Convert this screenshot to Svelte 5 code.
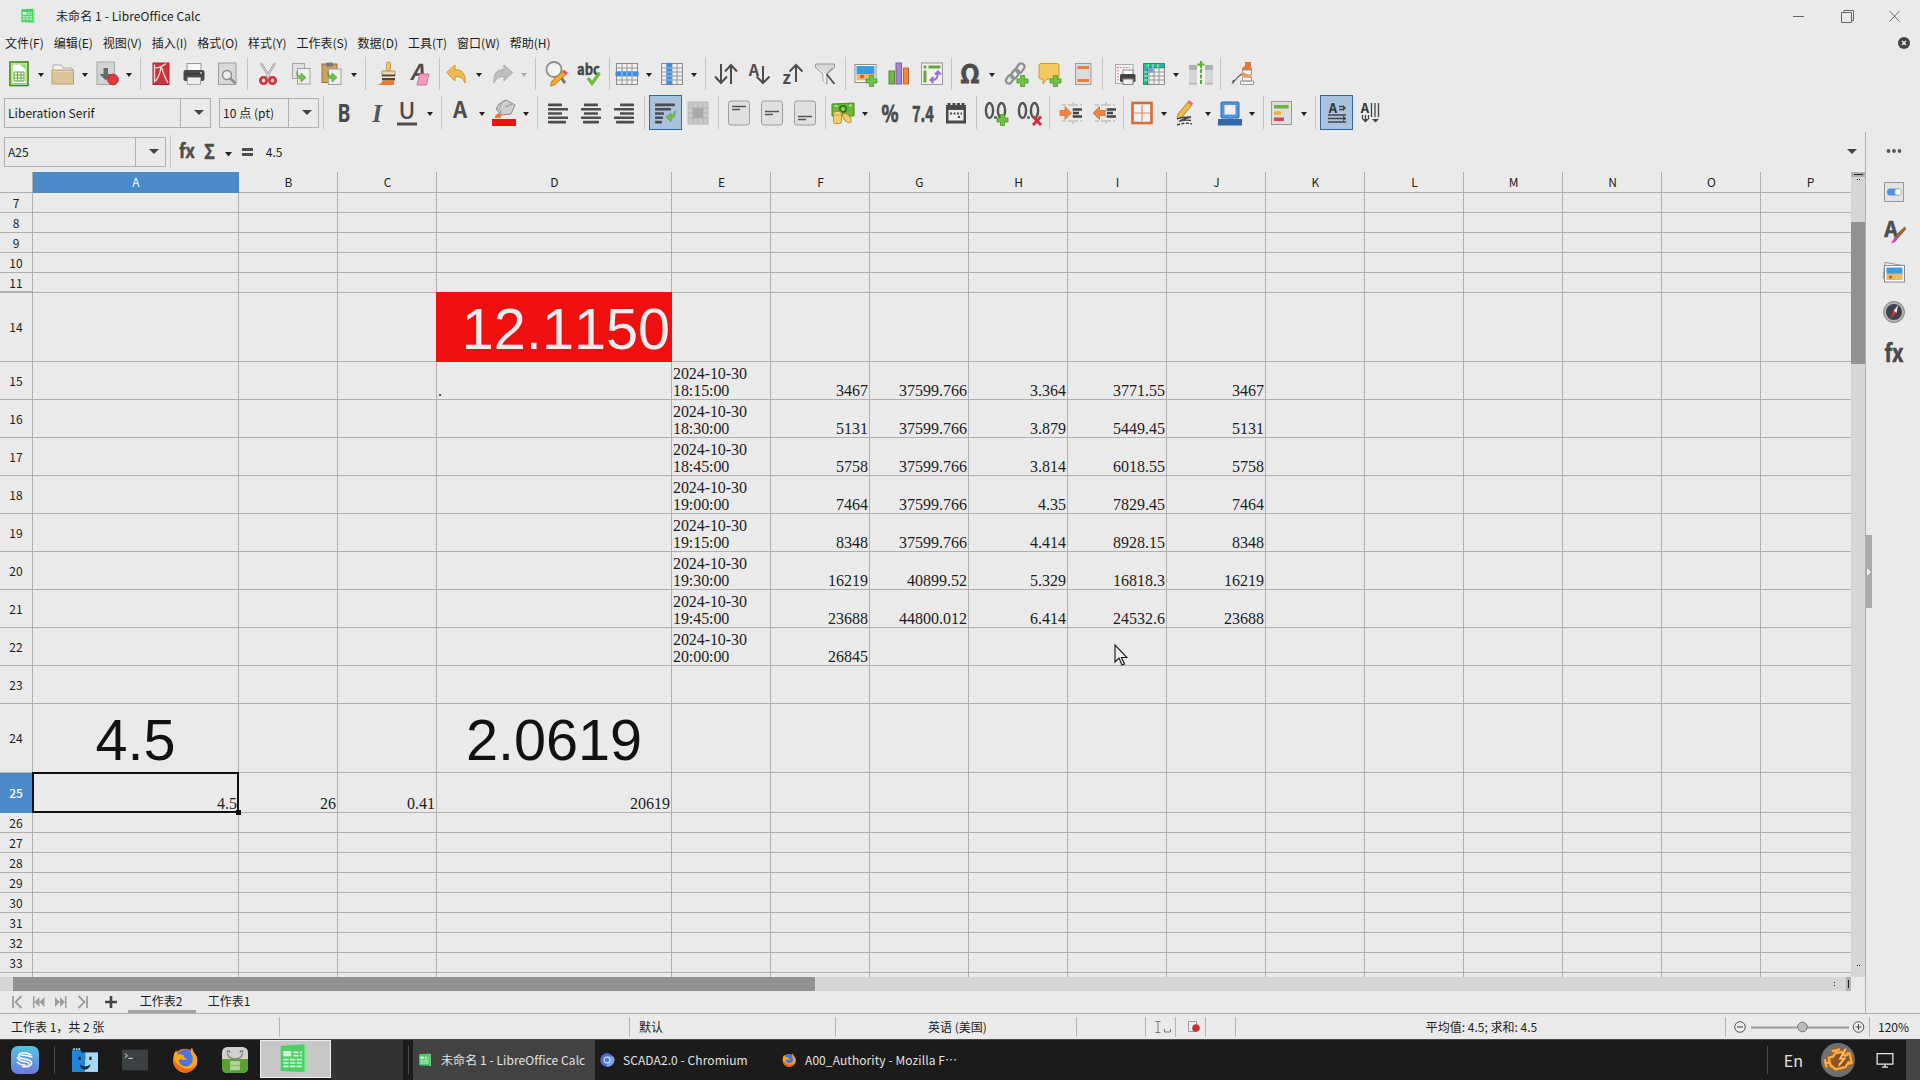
<script>
  const plus = '<path d="M15.500 13.500h4v3.500h3.500v4h-3.500v3.500h-4v-3.500h-3.500v-4h3.500z" fill="#73c048" stroke="#459a22" stroke-width=".8"/>';
  const grid = (extra) => `<rect x="1.500" y="1.500" width="21" height="21" fill="#efefef" stroke="#8c8c8c"/><path d="M2 6h20M2 10h20M2 14h20M2 18h20M7 2v20M12 2v20M17 2v20" stroke="#979797" fill="none"/>${extra}`;
  const T = (x, y, s, t, f = '#4d4d4d', w = 700, extra = '') =>
    `<text x="${x}" y="${y}" font-size="${s}" font-weight="${w}" fill="${f}" text-anchor="middle" ${extra}>${t}</text>`;
  const bars = (xs) => xs.map(([x, w], i) => `<rect x="${x}" y="${2.6 + i * 4.3}" width="${w}" height="2.600" rx=".6" fill="#4d4d4d"/>`).join('');
  const firefox = '<circle cx="12" cy="12.500" r="11" fill="#f57c14"/><circle cx="12.500" cy="10" r="8" fill="#4c73e4"/><path d="M2 6Q0 14 5 20T18 22Q25 18 23 9L20 5Q19 1 18 1Q16 4 19 9Q20 16 14 18Q7 18 6 12L9 11Q11 13 14 11Q11 10 11 8Q8 6 5 7L4 3z" fill="#fba818"/><path d="M1.500 11Q2 20 10 23T22 16Q18 21 12 20Q5 18 1.500 11z" fill="#f1661a"/>';
  const calc = '<path d="M2 2l18-1v21L2 21z" fill="#4ccf67"/><path d="M20 1l2 1v20l-2 1z" fill="#86e998"/><rect x="4" y="6" width="6" height="4" fill="#d4f8d8"/><path d="M11.500 7h6.500M11.500 9.500h6.500M4 12.500h14M4 15h14M4 17.500h14" stroke="#d4f8d8" stroke-width="1.300" stroke-dasharray="4 1"/>';
  const chip = (b) => `<rect x="1.500" y="0" width="21" height="24" rx="2.500" fill="#e0e0e0" stroke="#9d9d9d"/>${b}`;
  const zeros = '<g fill="none" stroke="#555" stroke-width="2.400"><ellipse cx="4.500" cy="9.500" rx="3.600" ry="7.500"/><ellipse cx="16.500" cy="9.500" rx="3.600" ry="7.500"/></g><circle cx="10.500" cy="16.500" r="1.500" fill="#555"/>';
  const hand = '<path d="M3 4h20M3 20h20M14 1v22" stroke="#aaa" stroke-dasharray="4 2"/>';

  const icons = {
    new: '<rect x="3" y="0" width="18" height="23.500" fill="#dff5c8" stroke="#3a8a12" stroke-width="1.600"/><rect x="5" y="2" width="14" height="19.500" fill="#fff" stroke="#9bd26a"/><path d="M7 10h10v9H7zM7 13h10M7 16h10M10.500 10v9M14 10v9" fill="none" stroke="#5aa82c"/><path d="M13 2.500h5.500v5z" fill="#9bd26a"/>',
    open: '<path d="M2 3h8l2 3h9v4H2z" fill="#f5f5f5" stroke="#aaa"/><path d="M1 8h21.500v14H1z" fill="#dcc49a" stroke="#bf9f6c"/><path d="M2 9.500h20" stroke="#ead9b8"/>',
    save: '<rect x="2" y="0" width="17.500" height="22.500" fill="#d4d4d4" stroke="#a5a5a5"/><path d="M8.500 6h4.500v6h4l-6.200 6.500L4.500 12h4z" fill="#6a6a6a"/><circle cx="18" cy="17.500" r="5.300" fill="#dc3b41" stroke="#b92b33"/>',
    pdf: '<rect x="4" y="1" width="16" height="21.500" fill="#c9353d" stroke="#a9252d"/><path d="M17 1.500Q11 6 6.500 6M12 4Q15 14 19 21M12 4Q11 14 6.500 19M5.500 2.500v18" stroke="#f3dede" stroke-width="1.300" fill="none"/>',
    print: '<rect x="5" y="1.500" width="14" height="9" fill="#f7f7f7" stroke="#999"/><rect x="1.500" y="8" width="21" height="11" rx="2" fill="#4a4a4a"/><path d="M2 12h20" stroke="#333"/><circle cx="19" cy="11" r="1" fill="#9cf"/><path d="M5.500 15.500h13v7h-13z" fill="#efefef" stroke="#aaa"/>',
    preview: '<rect x="3.500" y="1" width="17.500" height="21.500" fill="#d9d9d9" stroke="#9c9c9c"/><circle cx="12" cy="13" r="4.500" fill="#ececec" stroke="#8d8d8d" stroke-width="1.500"/><path d="M15.500 16.500l5 5" stroke="#8a8a8a" stroke-width="2.500"/>',
    cut: '<path d="M5 1l9 15M19 1l-9 15" stroke="#9a9a9a" stroke-width="2.400"/><path d="M5 1l9 15M19 1l-9 15" stroke="#ddd" stroke-width="1"/><circle cx="7.500" cy="18.500" r="3.200" fill="#f3d4d4" stroke="#cf3038" stroke-width="2.600"/><circle cx="16.500" cy="18.500" r="3.200" fill="#f3d4d4" stroke="#cf3038" stroke-width="2.600"/>',
    copy: '<rect x="3.500" y="1.500" width="12" height="15" fill="#e0e0e0" stroke="#a5a5a5"/><rect x="8.500" y="6.500" width="12.500" height="15.500" fill="#efefef" stroke="#a0a0a0"/><path d="M8 9.500q0 4.500 4 4.500v-3l5 4.500-5 4.500v-3q-5 0-4-7.500z" fill="#74c547" stroke="#4e9a2a" stroke-width=".7"/>',
    paste: '<rect x="2" y="2" width="15" height="18.500" fill="#c9a25c" stroke="#96733a"/><rect x="6" y=".5" width="7" height="4" rx="1" fill="#777"/><rect x="8.500" y="7" width="12.500" height="15.500" fill="#efefef" stroke="#a0a0a0"/><path d="M8 9.500q0 4.500 4 4.500v-3l5 4.500-5 4.500v-3q-5 0-4-7.500z" fill="#74c547" stroke="#4e9a2a" stroke-width=".7"/>',
    clone: '<rect x="12.500" y="0" width="4" height="9" rx="1.600" fill="#f0c170" stroke="#b9853a" stroke-width=".8"/><path d="M8 9h13v5H8z" fill="#ecd9b0" stroke="#a18450" stroke-width=".8"/><path d="M8 12.500h13v2.200H8zM8 16h13v2.500H8z" fill="#4b4640"/><path d="M8 14.500h13V16H8z" fill="#efe6d2"/><path d="M9 18.500h11V23H2Q7 22.500 9 18.500z" fill="#ee7b2a"/>',
    clear: T(10, 18, 22, 'A', '#4d4d4d', 700, 'font-style="italic"') + '<path d="M13 12h9l-2.500 11H10z" fill="#f29ac0" stroke="#d8709e"/>',
    undo: '<path d="M1.500 10.500L10 3v4.500q11.500 0 10 13.500-2.500-7-10-6.500V19z" fill="#f2bb52" stroke="#cf9a32"/>',
    redo: '<path d="M22.500 10.500L14 3v4.500q-11.500 0-10 13.500 2.500-7 10-6.500V19z" fill="#bfbfbf" stroke="#ababab"/>',
    find: '<circle cx="10" cy="7.500" r="7.500" fill="#f3f3f3" stroke="#8d8d8d" stroke-width="1.800"/><path d="M15 13l6 8" stroke="#777" stroke-width="3"/><path d="M20 8l3.500 3L11 22.500l-4.500 1.500L8 19z" fill="#f0ab32" stroke="#b87d1b"/><path d="M20 8l3.500 3-2 2L18 10z" fill="#dd5a7c"/>',
    spell: T(11.5, 12.500, 15, 'abc', '#444', 700, 'stroke="#444" stroke-width=".4" textLength="23" lengthAdjust="spacingAndGlyphs"') + '<path d="M11 16l4 5.500L22.500 11" stroke="#6bbd3d" stroke-width="3.200" fill="none"/>',
    row: grid('<rect x=".5" y="9.500" width="23" height="4.500" fill="#3d8de0"/><path d="M7 10v4M12 10v4M17 10v4" stroke="#9ccbf5"/>'),
    col: grid('<rect x="6.500" y=".8" width="5.500" height="22" fill="#3d8de0"/><path d="M7 6h5M7 10h5M7 14h5M7 18h5" stroke="#9ccbf5"/>'),
    sort: '<path d="M7 2v19M1 14.500L7 21l6-6.500M17 22V3M11 9.500L17 3l6 6.500" stroke="#4d4d4d" stroke-width="2" fill="none"/>',
    az: T(7, 14, 16, 'A') + '<path d="M16 4v17M9.500 14.500L16 21l6.500-6.500" stroke="#4d4d4d" stroke-width="2" fill="none"/>',
    za: T(6.5, 22, 17, 'z') + '<path d="M16 20V3M9.500 9.500L16 3l6.500 6.500" stroke="#4d4d4d" stroke-width="2" fill="none"/>',
    filter: '<path d="M2.500 2h19v3.500L14 12v10l-4-3v-7L2.500 5.500z" fill="#d9d9d9" stroke="#969696"/><path d="M5 6l5.500 6v7.500l2.500 2V12" fill="#f4f4f4"/><path d="M13.500 12l8 10" stroke="#555" stroke-width="2"/><path d="M19.500 6l-5 5" stroke="#888"/>',
    image: '<rect x="1" y="2.500" width="21" height="18" fill="#fff" stroke="#8c8c8c"/><rect x="2.500" y="4" width="18" height="9" fill="#3a9be0"/><rect x="2.500" y="12" width="18" height="6.500" fill="#eeb860"/><circle cx="8" cy="14.500" r="2" fill="#d85b2a"/>' + plus,
    chart: '<rect x="2" y="9" width="5.500" height="13" fill="#74b54a" stroke="#538c30"/><rect x="9" y="1" width="5.500" height="21" fill="#a682cf" stroke="#7d59a8"/><rect x="16.500" y="6" width="5" height="16" fill="#ee8542" stroke="#c9622a"/>',
    pivot: '<rect x="1.500" y="1" width="21" height="21.500" fill="#f2f2f2" stroke="#999"/><path d="M3.500 3.500h3v3h-3zM8.500 3.500h12v3h-12zM3.500 8.500h3v12h-3z" fill="#67a83c"/><path d="M11 18q7 1 7-8M15 12.500l3-3 3 3M13.500 15l-3 3 3 3" stroke="#9a6fce" stroke-width="2" fill="none"/>',
    omega: T(12, 21, 25, 'Ω', '#4d4d4d', 700, 'stroke="#4d4d4d" stroke-width=".9"'),
    link: '<g fill="none" stroke="#919191" stroke-width="2.400"><rect x="12" y="1" width="6.500" height="10" rx="3" transform="rotate(35 15 6)"/><rect x="7" y="7" width="6" height="10" rx="3" transform="rotate(35 10 12)"/><rect x="2" y="13" width="6" height="9" rx="3" transform="rotate(35 5 17)"/></g>' + plus,
    comment: '<path d="M3 1.500h16q2 0 2 2V16q0 1-2 1H9l-4 5v-5H3q-2 0-2-2V3.500q0-2 2-2z" fill="#f3ca5e" stroke="#c99a30"/>' + plus,
    header: '<rect x="4.500" y="1.500" width="15.500" height="21" fill="#dcdcdc" stroke="#9c9c9c"/><path d="M6.500 5.500h11.500M6.500 18.500h11.500" stroke="#e77b3a" stroke-width="3"/>',
    parea: '<rect x="3.500" y="2.500" width="17.500" height="19" fill="#f2f2f2" stroke="#aaa"/><path d="M5 5.500h13M6 5v14" stroke="#dc6464" stroke-dasharray="1.500 1.500"/><rect x="11" y="8" width="10" height="5" fill="#fff" stroke="#888"/><rect x="8" y="12" width="15.500" height="8" rx="1.500" fill="#444"/><rect x="11" y="17" width="10" height="5.500" fill="#eee" stroke="#888"/>',
    freeze: grid('<path d="M1.500 1.500h21v4h-17v17h-4z" fill="#2fb693" stroke="#169372"/><path d="M6 2v4M11 2v4M16 2v4M2 10h4M2 14h4M2 18h4" stroke="#b5eadb"/><rect x="6.500" y="6.500" width="5" height="4" fill="#5ca4ea"/>'),
    split: '<path d="M0 3h8v19H0zM16 3h8v19h-8z" fill="#d6d6d6"/><path d="M0 3h8v5H0zM16 3h8v5h-8zM0 21h8v1.500H0zM16 21h8v1.500h-8z" fill="#b0b0b0"/><rect x="8.500" y="4" width="7" height="18.500" fill="#f8f8f8"/><path d="M12 7v16" stroke="#56b22b" stroke-width="2.200" stroke-dasharray="4 1.500"/><path d="M12-1v7M8.500 2.500h7" stroke="#56b22b" stroke-width="2.200"/>',
    draw: '<path d="M13 12q-5 3-7 6l-1 1q-1 3-4 3.500 2-2 1.500-4l2.500-1q3-4 8-7z" fill="#555"/><path d="M15 0h6v6h1v3H12V6l3-2z" fill="#e2793a"/><path d="M12.500 8h9v5h-9zM12.500 15h9v4h-9zM10.500 19h13v3.500h-13z" fill="#f2f2f2" stroke="#999"/><path d="M12.500 10l9 4v2l-9-1z" fill="#ee9a62"/>',
    bold: T(12, 21, 25, 'B', '#4a4a4a', 700, 'font-family="Noto Sans" textLength="13" lengthAdjust="spacingAndGlyphs"'),
    italic: T(12, 21, 25, 'I', '#555', 700, 'font-style="italic" font-family="Liberation Serif"'),
    underline: T(11, 18, 23, 'U', '#4a4a4a', 500) + '<rect x="1" y="21.500" width="20" height="3" fill="#4d4d4d"/>',
    fontcolor: T(12, 17, 22, 'A'),
    fill: '<path d="M7 3l7-4 9 5-4 9-10 1-5-6z" fill="#cfcfcf" stroke="#888"/><path d="M8 7q1-8 5-7M13 6l7-3M4 8q5-2 5 6" stroke="#999" fill="none"/><path d="M3 15q4-5 6-1v3H3z" fill="#e77b3a"/><rect x="0" y="18" width="24" height="7" fill="#f01010"/>',
    left: bars([[2, 14], [2, 20], [2, 14], [2, 20], [2, 18]]),
    center: bars([[5, 14], [2, 20], [5, 14], [2, 20], [4, 16]]),
    right: bars([[8, 14], [2, 20], [8, 14], [2, 20], [4, 18]]),
    wrap: bars([[2, 20], [2, 16], [2, 9], [2, 8], [2, 7]]) + '<path d="M22 10q1 7-4 7.500V21l-5-5 5-4v3q3-1 4-5z" fill="#79bd50" stroke="#4f9a2c" stroke-width=".6"/>',
    merge: '<rect x="2" y="1" width="20" height="22" fill="#c9c9c9" stroke="#b5b5b5"/><path d="M2 7h20M2 12h20M2 17h20M7 2v20M12 2v20M17 2v20" stroke="#b3b3b3"/><rect x="7" y="7" width="10" height="10" fill="#aaa"/>',
    vtop: chip('<path d="M5 5.500h14M5 8.500h8" stroke="#555" stroke-width="1.600"/>'),
    vmid: chip('<path d="M5 10.500h14M5 13.500h8" stroke="#555" stroke-width="1.600"/>'),
    vbot: chip('<path d="M5 15.500h14M5 18.500h8" stroke="#555" stroke-width="1.600"/>'),
    money: '<path d="M1 3l22-1v13H1z" fill="#6cb539" stroke="#4b8f22"/><circle cx="12" cy="8" r="4" fill="#2f7a14"/><circle cx="12" cy="8" r="2" fill="#a0d673"/><path d="M3.500 5h3M18 4.500h3" stroke="#c4e8a4" stroke-width="1.500"/><rect x="2.500" y="10.500" width="8" height="12" rx="2" fill="#f0cf70" stroke="#b98f30"/><path d="M2.500 14h8" stroke="#c9a040"/><ellipse cx="16" cy="17" rx="3" ry="5.500" transform="rotate(-40 16 17)" fill="#f0cf70" stroke="#b98f30"/>',
    percent: T(12, 20.500, 22, '%', '#4a4a4a', 700, 'stroke="#4a4a4a" stroke-width=".8" textLength="17" lengthAdjust="spacingAndGlyphs"'),
    number: T(12, 20.500, 22, '7.4', '#4a4a4a', 700, 'stroke="#4a4a4a" stroke-width=".5" textLength="22" lengthAdjust="spacingAndGlyphs"'),
    date: '<path d="M2 4h20v18.500H2z" fill="#4a4a4a"/><path d="M5 2v3M10 2v3M14.500 2v3M19 2v3" stroke="#4a4a4a" stroke-width="3"/><rect x="4.500" y="9" width="15" height="10.500" fill="#efefef"/><path d="M6 12.500h12M14 16h3" stroke="#4a4a4a" stroke-width="2" stroke-dasharray="2 1.500"/>',
    addDec: zeros + plus,
    delDec: zeros + '<path d="M15 15.500l8 8.500M23 15.500l-8 8.500" stroke="#cf3038" stroke-width="3"/>',
    indent: hand + '<path d="M1 9.500h5v-4l6.500 6.500L6 18.500v-4H1z" fill="#ee8542" stroke="#cf6a2c" stroke-width=".7"/><path d="M14 8.500h9M14 12h6M14 15.500h9" stroke="#444" stroke-width="2.300"/>',
    outdent: hand + '<path d="M13 9.500H7.500v-4L1 12l6.500 6.500v-4H13z" fill="#ee8542" stroke="#cf6a2c" stroke-width=".7"/><path d="M15 8.500h9M15 12h6M15 15.500h9" stroke="#444" stroke-width="2.300"/>',
    border: '<rect x="2.500" y="2" width="19" height="20" fill="#f3f3f3" stroke="#d96a31" stroke-width="2.600"/><path d="M12 4v16M4 12h16" stroke="#e08a5e" stroke-width="1.200"/>',
    pen: '<path d="M14 1l4 3-10 12-5 2 1-5z" fill="#f0b94a" stroke="#b5842a"/><path d="M15-1l4.500 3.500-2 2L13 1.500z" fill="#e56f90"/><path d="M3 18q5-2 14-2-8 2-12 4.500 6-2 12-1" stroke="#444" stroke-width="1.300" fill="none"/><path d="M3 24q8-3 15-1" stroke="#444" stroke-width="1.500" fill="none" stroke-dasharray="3 1.500"/>',
    bcolor: '<rect x="3" y="1" width="18" height="16" rx="1" fill="#4c94e0" stroke="#2f6bb0"/><rect x="6.500" y="4" width="11" height="9.500" fill="#f0f0f0"/><rect x="0" y="18" width="24" height="6.500" fill="#3465a4"/><path d="M9 16h6v2H9z" fill="#4c94e0"/>',
    cond: '<rect x="1.500" y="0.500" width="20" height="23" fill="#dedede" stroke="#9a9a9a"/><rect x="4" y="4" width="14.500" height="3.500" fill="#6fb441"/><rect x="4" y="10.300" width="7" height="3.500" fill="#efb33c"/><rect x="4" y="16.500" width="10" height="3.500" fill="#d9474f"/>',
    ltr: T(8, 12, 13, 'A', '#333') + '<path d="M14 5.500h5M14 8.500h5M3 14h18M3 17.500h18M3 21h18" stroke="#444" stroke-width="1.300"/><path d="M18 4l3 3-3 3zM18 14.500l3 3-3 3z" fill="#444"/>',
    ttb: T(7, 12, 13, 'A', '#333') + '<path d="M13.500 2v14M17 2v14M20.500 2v14M4.500 14v4M7.500 14v4M10.500 14v4" stroke="#444" stroke-width="1.300"/><path d="M4 18h7l-3.500 3.500zM14 18h7l-3.500 3.500z" fill="#444"/>',
    props: '<rect x="2.500" y="2.500" width="19" height="19" fill="#e2e2e2" stroke="#999"/><rect x="5" y="8.500" width="14.500" height="7" rx="3.500" fill="#4690dd"/><circle cx="16" cy="12" r="3.200" fill="#fff" stroke="#aaa" stroke-width=".6"/>',
    styles: T(9, 17, 21, 'A', '#4d4d4d', 700, 'stroke="#4d4d4d" stroke-width=".5"') + '<path d="M22.500 7l1.500 2-8 9-3-2z" fill="#9c6434" stroke="#7a4a20" stroke-width=".5"/><path d="M13 16l3 2.500q-3 4.500-7 4.500 2-2 4-7z" fill="#b94ab0"/>',
    gallery: '<path d="M3 2.500l18 3v14L1 18z" fill="#efefef" stroke="#999"/><rect x="2.500" y="5.500" width="20" height="16.500" fill="#fff" stroke="#888"/><rect x="4.500" y="7.500" width="16" height="7" fill="#3a9be0"/><rect x="4.500" y="13.500" width="16" height="6.500" fill="#eeb860"/><circle cx="8.500" cy="17" r="1.600" fill="#d84b2a"/>',
    nav: '<circle cx="12" cy="12" r="10.500" fill="#b5b5b5" stroke="#858585"/><circle cx="12" cy="12" r="8" fill="#3c434c"/><path d="M16 5l-1.500 8-3-2z" fill="#eee"/><path d="M8 19l3.500-8 3 2z" fill="#dc3038"/>',
    fx: T(12, 21.500, 24, 'fx', '#4a4a4a', 700, 'stroke="#4a4a4a" stroke-width=".6" textLength="19" lengthAdjust="spacingAndGlyphs"'),
    calc, firefox,
    deepin: '<defs><linearGradient id="dg" x1="0" y1="0" x2="0" y2="1"><stop offset="0" stop-color="#55c3e4"/><stop offset="1" stop-color="#6f78de"/></linearGradient></defs><rect x="0" y="0" width="24" height="24" rx="6" fill="url(#dg)"/><path d="M17 7.500Q12 4.500 8 6.500q-3 2 0 3.800 3 1 7 1.700 4 1.500 2 4-2 2.500-7 1.500M18 9.500Q13 7.500 9 8M5.500 10q1.500 3 6 3.500t3.500 2M5.500 14q3 2.500 7 2.500" stroke="#fff" stroke-width="1.300" fill="none" stroke-linecap="round"/>',
    files: '<path d="M0 3h8l1 2h3v18H0z" fill="#1e86dc"/><path d="M12 5h12v18H12z" fill="#a9d8f6"/><path d="M1 2h7" stroke="#c5e7fa" stroke-width="1.500" stroke-dasharray="1.500 1"/><path d="M12 5v7" stroke="#1e86dc"/><path d="M7 9v3M17 9v3" stroke="#123" stroke-width="2"/><path d="M7 16q5 4 10 0-1 5-5 5t-5-5z" fill="#132b40"/>',
    term: '<rect x="0" y="2.500" width="24" height="19" fill="#3b4042"/><path d="M2.500 6l2.500 2-2.500 2M6 10.500h4" stroke="#ddd" stroke-width=".9" fill="none"/>',
    store: '<rect width="24" height="24" rx="5" fill="#d0d0ce"/><path d="M0 11h24v8q0 5-5 5H5q-5 0-5-5z" fill="#5aa12c"/><path d="M5 6Q6 11 12 11T19 6" stroke="#888" stroke-width="1.200" fill="#d0d0ce"/><path d="M4.500 5q1.500-3 3 0M16.500 5q1.500-3 3 0" stroke="#555" fill="none"/><path d="M8 13.500h3.500v3H8zM12.500 13.500H16v3h-3.500zM8 18h3.500v3H8zM12.500 18H16v3h-3.500z" fill="#b4d49a" stroke="#b4d49a" stroke-linejoin="round"/>',
    chromium: '<circle cx="12" cy="12" r="11.500" fill="#4a72cc"/><path d="M12 6h11a11.500 11.500 0 0 1-11 17.500z" fill="#7ea2e8"/><circle cx="12" cy="12" r="5" fill="#4a78da" stroke="#cfdcf6" stroke-width="2"/>',
    engine: '<circle cx="12" cy="12" r="12" fill="#707070"/><g transform="rotate(-12 12 12)"><path d="M6 9h3l2-2h5l1 3h2v-1h2v7h-2v-1l-3 3H9l-2.500-3H6zM3 9.500v6M3 12.500h3M9 5h6M12 5v2" stroke="#a85f18" stroke-width="3.400" fill="none" stroke-linejoin="round"/><path d="M6 9h3l2-2h5l1 3h2v-1h2v7h-2v-1l-3 3H9l-2.500-3H6zM3 9.500v6M3 12.500h3M9 5h6M12 5v2" stroke="#f7ab4c" stroke-width="1.700" fill="#8a5420" stroke-linejoin="round"/></g><path d="M17.500 4l-4 7h3l-4 5" stroke="#ffc477" stroke-width="1.300" fill="none"/>',
    screen: '<path d="M1.500 3.500h21v14h-21zM12 17.500V21M8 21.500h8" stroke="#e8e8e8" stroke-width="1.700" fill="none"/>'
  };

  const standard = 'new+ open+ save+ | pdf print preview | cut copy paste+ | clone clear | undo+ redo- | find spell | row+ col+ | sort az za filter | image chart pivot | omega+ link comment header | parea freeze+ split | draw'.split(' ');
  const formatting = '| bold italic underline+ | fontcolor+ fill+ | left center right | wrap* merge | vtop vmid vbot | money+ percent number date | addDec delDec | indent outdent | border+ pen+ bcolor+ | cond+ | ltr* ttb'.split(' ');
  const menus = ['文件(F)', '编辑(E)', '视图(V)', '插入(I)', '格式(O)', '样式(Y)', '工作表(S)', '数据(D)', '工具(T)', '窗口(W)', '帮助(H)'];

  const columns = 'ABCDEFGHIJKLMNOP'.split('');
  const log = (t, ...v) => ({ E: `2024-10-30 ${t}`, F: v[0], G: v[1], H: v[2], I: v[3], J: v[4] });
  const data = {
    14: { D: '12.1150' },
    15: { D: '.', ...log('18:15:00', '3467', '37599.766', '3.364', '3771.55', '3467') },
    16: log('18:30:00', '5131', '37599.766', '3.879', '5449.45', '5131'),
    17: log('18:45:00', '5758', '37599.766', '3.814', '6018.55', '5758'),
    18: log('19:00:00', '7464', '37599.766', '4.35', '7829.45', '7464'),
    19: log('19:15:00', '8348', '37599.766', '4.414', '8928.15', '8348'),
    20: log('19:30:00', '16219', '40899.52', '5.329', '16818.3', '16219'),
    21: log('19:45:00', '23688', '44800.012', '6.414', '24532.6', '23688'),
    22: log('20:00:00', '26845'),
    24: { A: '4.5', D: '2.0619' },
    25: { A: '4.5', B: '26', C: '0.41', D: '20619' }
  };
  const rows = [7, 8, 9, 10, 11, ...Array.from({ length: 21 }, (_, i) => i + 14)];
  const size = (r) => (r === 14 || r === 24 ? 'tall' : r >= 15 && r <= 23 ? 'mid' : r === 25 ? 'current' : 'short');
</script>

{#snippet icon(name)}
  <svg class="icon" viewBox="0 0 24 24">{@html icons[name]}</svg>
{/snippet}

{#snippet tools(items)}
  {#each items as item}
    {#if item === '|'}
      <i class="sep"></i>
    {:else}
      {@const name = item.replace(/[-+*]/, '')}
      <span class="tool" class:drop={/[-+]/.test(item)} class:on={item.endsWith('*')}>
        {@render icon(name)}
        {#if /[-+]/.test(item)}<b class="caret" class:off={item.endsWith('-')}></b>{/if}
      </span>
    {/if}
  {/each}
{/snippet}

<div class="screen">
  <header class="title">
    {@render icon('calc')}
    <span class="name">未命名 1 - LibreOffice Calc</span>
    <svg class="winctl" viewBox="0 0 110 16"><path d="M2 8.500h11M50.500 4.500h10v10h-10zM53 4V2.500h9.500v10H61M98.500 3l10 10.500M108.500 3l-10 10.500" fill="none" stroke="#666" /></svg>
  </header>
  <nav class="menu">
    {#each menus as m}<span>{m}</span>{/each}
    <svg class="docclose" viewBox="0 0 12 12"><circle cx="6" cy="6" r="6" fill="#444" /><path d="M4 4l4 4M8 4L4 8" stroke="#eee" stroke-width="1.500" /></svg>
  </nav>
  <div class="toolbar first">{@render tools(standard)}</div>
  <div class="toolbar second">
    <div class="combo font"><span>Liberation Serif</span><i><b class="arrow"></b></i></div>
    <div class="combo pt"><span>10 点 (pt)</span><i><b class="arrow"></b></i></div>
    {@render tools(formatting)}
  </div>

  <div class="body">
    <main>
      <div class="formula">
        <div class="combo ref"><span>A25</span><i><b class="arrow"></b></i></div>
        <i class="sep"></i>
        <svg class="fxbar" viewBox="0 0 82 30"><g font-weight="700" fill="#4d4d4d" stroke="#4d4d4d" stroke-width=".4"><text x="4" y="21" font-size="19" textLength="16" lengthAdjust="spacingAndGlyphs">fx</text><text x="29" y="22" font-size="20" textLength="11" lengthAdjust="spacingAndGlyphs">Σ</text></g><path d="M50 15h7l-3.500 4.500z" fill="#222" /><path d="M67 12.500h11M67 17.500h11" stroke="#4d4d4d" stroke-width="3" /></svg>
        <span class="value">4.5</span>
        <b class="arrow"></b>
      </div>
      <div class="sheetarea">
        <div class="sheet">
          <div class="corner"></div>
          {#each columns as c}<div class="colhead" class:sel={c === 'A'}>{c}</div>{/each}
          {#each rows as r}
            <div class="rowhead {size(r)}" class:sel={r === 25} class:gap={r === 11}>{r === 34 ? '' : r}</div>
            {#each columns as c}
              <div
                class="cell {size(r)}"
                class:red={r === 14 && c === 'D'}
                class:mean={r === 24}
                class:stamp={c === 'E' || (c === 'D' && r === 15)}
                class:active={r === 25 && c === 'A'}
              ><span>{data[r]?.[c] ?? ''}</span></div>
            {/each}
          {/each}
        </div>
        <div class="vscroll">
          <i class="split"></i><i class="ticks"></i><i class="thumb"></i><i class="ticks end"></i>
        </div>
      </div>
      <div class="hscroll"><i class="thumb"></i><i class="ticks"></i><i class="split"></i></div>
      <div class="tabs">
        <svg class="tabnav" viewBox="0 0 110 16"><path d="M1 2v12M9.500 2L3.500 8l6 6M66.500 2l6 6-6 6M75 2v12" stroke="#9d9d9d" stroke-width="1.800" fill="none" /><path d="M21 2h1.500v12H21zM27.500 3v10l-5-5zM32.500 3v10l-5-5zM43 3v10l5-5zM48 3v10l5-5zM53 2h1.500v12H53z" fill="#9d9d9d" /><path d="M93 8h12M99 2v12" stroke="#444" stroke-width="2.600" /></svg>
        <span class="tab cur">工作表2</span><span class="tab">工作表1</span>
      </div>
    </main>
    <aside>
      <i class="handle"></i>
      <svg class="dots" viewBox="0 0 16 4"><circle cx="2.500" cy="2" r="1.900" /><circle cx="8" cy="2" r="1.900" /><circle cx="13.500" cy="2" r="1.900" /></svg>
      {#each ['props', 'styles', 'gallery', 'nav', 'fx'] as s}{@render icon(s)}{/each}
    </aside>
  </div>

  <footer class="status">
    <span class="pos">工作表 1，共 2 张</span>
    <span class="found"></span>
    <span class="style">默认</span>
    <span class="lang">英语 (美国)</span>
    <span class="blank"></span>
    <span class="ins"><svg viewBox="0 0 18 14"><path d="M1.500 1.500h5M4 1.500v11M1.500 12.500h5M10.500 9v3h6V9" stroke="#777" fill="none" /></svg></span>
    <span class="ins"><svg viewBox="0 0 18 14"><path d="M4.500 1.500h8v10h-8z" stroke="#999" fill="#eee" /><circle cx="12" cy="8" r="3.800" fill="#c73338" /></svg></span>
    <span class="sig"></span>
    <span class="sum">平均值: 4.5; 求和: 4.5</span>
    <span class="zoom"><svg viewBox="0 0 140 14"><path d="M22 7.500h98" stroke="#999" stroke-width="2" /><g fill="#ececec" stroke="#555"><circle cx="11" cy="7" r="5.300" /><circle cx="129.500" cy="7" r="5.300" /></g><circle cx="73.500" cy="7" r="4.800" fill="#bbb" stroke="#777" /><path d="M8 7h6M126.500 7h6M129.500 4v6" stroke="#444" /></svg></span>
    <span class="pct">120%</span>
  </footer>

  <div class="taskbar">
    <span class="launch">{@render icon('deepin')}</span>
    <i class="bar"></i>
    <span class="app files">{@render icon('files')}</span>
    <span class="app">{@render icon('term')}</span>
    <span class="app">{@render icon('firefox')}</span>
    <span class="app store">{@render icon('store')}</span>
    <span class="live">{@render icon('calc')}</span>
    <span class="empty"></span>
    <span class="slot"><i class="bar"></i></span>
    <span class="task here">{@render icon('calc')}未命名 1 - LibreOffice Calc</span>
    <span class="task">{@render icon('chromium')}SCADA2.0 - Chromium</span>
    <span class="task" lang="zh-CN">{@render icon('firefox')}A00_Authority - Mozilla F…</span>
    <div class="tray">
      <i class="bar"></i>
      <span class="en">En</span>
      <span class="engine">{@render icon('engine')}</span>
      <span class="mon">{@render icon('screen')}</span>
      <i class="desk"></i>
    </div>
  </div>

  <svg class="pointer" viewBox="0 0 14 22"><path d="M1 1v17l4-4 3 7 2.500-1-3-6.500H13z" fill="#eee" stroke="#222" stroke-width="1.200" /></svg>
</div>

<style>
  :global(body) { background: #eaeaea; overflow: hidden; }
  .screen {
    width: 1920px; height: 1080px; display: flex; flex-direction: column; position: relative; overflow: hidden;
    background: #eaeaea; color: #1c1c1c; box-sizing: border-box; cursor: default;
    font: 12px/16px "Noto Sans CJK SC", "Noto Sans", sans-serif;
  }
  .screen :global(*) { box-sizing: border-box; }
  .icon { width: 24px; height: 24px; flex: none; overflow: visible; }
  i { font-style: normal; display: block; flex: none; }

  .title { height: 32px; display: flex; align-items: center; padding: 0 20px 1px; }
  .title .icon { width: 16px; height: 16px; }
  .name { margin-left: 20px; letter-spacing: 0.100px; }
  .winctl { width: 110px; height: 16px; margin-left: auto; margin-right: -1px; }
  .menu { height: 22px; display: flex; align-items: center; gap: 9.900px; padding: 0 10px 0 5px; white-space: nowrap; }
  .docclose { width: 12px; height: 12px; margin-left: auto; }

  .toolbar { display: flex; align-items: center; }
  .first { height: 39px; padding-left: 4.500px; }
  .second { height: 39px; padding-left: 4px; }
  .tool { width: 33px; height: 35px; display: flex; align-items: center; justify-content: center; flex: none; }
  .tool.drop { width: 44.200px; justify-content: flex-start; padding-left: 2px; }
  .tool.on { background: #a9c3df; border: 1px solid #3465a4; }
  .caret { border: 3.500px solid transparent; border-top: 4.500px solid #222; border-bottom: 0; margin: 3px 0 0 7px; }
  .caret.off { border-top-color: #aaa; }
  .sep { width: 7.800px; height: 33px; flex: none; background: linear-gradient(#c4c4c4, #c4c4c4) 3px 0 / 1px 100% no-repeat; }
  .combo { height: 30px; display: flex; border: 1px solid #b0b0b0; align-items: center; flex: none; }
  .combo span { flex: 1; padding-left: 3px; letter-spacing: 0.060px; }
  .combo i { width: 30px; height: 100%; border-left: 1px solid #b0b0b0; display: flex; align-items: center; justify-content: center; padding-left: 6px; }
  .arrow { border: 5px solid transparent; border-top: 5.500px solid #444; border-bottom: 0; display: block; }
  .font { width: 207px; margin-right: 8px; }
  .pt { width: 100px; margin-right: 1px; }

  .body { display: flex; height: 882px; flex: none; border-bottom: 1px solid #b0b0b0; }
  main { width: 1865px; display: flex; flex-direction: column; flex: none; }
  .formula { height: 40px; display: flex; align-items: center; padding: 0 8px 1px 4px; }
  .ref { width: 162px; margin-right: 1px; }
  .fxbar { width: 82px; height: 30px; overflow: visible; }
  .value { margin-left: 9px; }
  .formula > .arrow { margin-left: auto; }

  .sheetarea { height: 805px; display: flex; overflow: hidden; flex: none; }
  .sheet {
    width: 1851px; height: 805px; overflow: hidden; display: grid; flex: none;
    grid-template-columns: 33px 206px 99px 99px 235px repeat(12, 99px); grid-auto-rows: max-content; align-content: start;
  }
  .corner, .colhead, .rowhead, .cell { border-right: 1px solid #b0b0b0; border-bottom: 1px solid #b0b0b0; }
  .corner, .colhead { height: 21px; }
  .colhead, .rowhead { display: flex; align-items: center; justify-content: center; }
  .colhead { padding-left: 1px; }
  .rowhead { line-height: 14px; }
  .colhead.sel, .rowhead.sel { background: #4b8bca; border-color: #4b8bca; color: #fff; }
  .rowhead.sel { font-weight: 500; }
  .rowhead.gap { box-shadow: inset 0 -1px #b0b0b0; }
  .short { height: 20px; }
  .mid { height: 38px; }
  .tall { height: 69px; }
  .current { height: 40px; }
  .cell { display: flex; align-items: flex-end; justify-content: flex-end; padding-right: 1px; font: 16px/17px "Liberation Serif", serif; }
  .cell.stamp { justify-content: flex-start; padding: 0 10px 0 1px; letter-spacing: -0.080px; }
  .cell.tall { font: 57.6px/66px "Liberation Sans", sans-serif; font-kerning: none; color: #111; }
  .cell.tall span { margin-bottom: -1px; }
  .cell.mean { justify-content: center; padding: 0; }
  .cell.red { background: #ef0f0f; color: #eee; border-color: #ef0f0f; margin: -1px 0 0 -1px; height: 70px; }
  .cell.active { position: relative; }
  .cell.active::before { content: ''; position: absolute; inset: -1px -1px -1px -1px; border: 2px solid #111; }
  .cell.active::after { content: ''; position: absolute; right: -3px; bottom: -3px; width: 5px; height: 5px; background: #111; }

  .vscroll { width: 14px; background: #d6d6d6; display: flex; flex-direction: column; align-items: center; }
  .vscroll .split { width: 14px; height: 5px; background: linear-gradient(#222, #222) 3px 2px / 9px 1px no-repeat, #b0b0b0; }
  .vscroll .ticks { width: 3px; height: 45px; background: linear-gradient(90deg, #222 1px, transparent 1px 2px, #222 2px) 0 2px / 3px 1px no-repeat; }
  .vscroll .thumb { width: 14px; height: 142px; background: #919191; }
  .vscroll .end { margin-top: auto; height: 14px; }
  .hscroll { height: 14px; width: 1851px; background: #d6d6d6; padding-left: 13px; display: flex; align-items: center; flex: none; }
  .hscroll .thumb { width: 802px; height: 14px; background: #919191; }
  .hscroll .ticks { margin: 0 11px 0 auto; width: 1px; height: 4px; background: linear-gradient(#222 1px, transparent 1px 3px, #222 3px); }
  .hscroll .split { width: 5px; height: 14px; background: linear-gradient(#222, #222) 2px 3px / 1px 8px no-repeat, #b0b0b0; }
  .tabs { height: 22px; display: flex; }
  .tabnav { width: 110px; height: 16px; margin: 3px 6px 0 12px; }
  .tab { width: 68px; padding-right: 2px; text-align: center; line-height: 20px; height: 22px; }
  .cur { border-bottom: 3px solid #a5a5a5; }
  aside { flex: 1; border-left: 1px solid #b0b0b0; position: relative; display: flex; flex-direction: column; align-items: center; gap: 16px; }
  .dots { width: 16px; height: 4px; margin: 17px 0 11px 1px; fill: #555; }
  aside .icon { margin-left: 1px; }
  .handle { position: absolute; left: 0; top: 403px; width: 6px; height: 73px; background: #a9a9a9; }
  .handle::after { content: ''; position: absolute; left: 1px; top: 33px; border: 4px solid transparent; border-left-color: #eee; border-right: 0; }

  .status { height: 25px; display: flex; padding: 3px 0 2px; flex: none; line-height: 20px; }
  .status > span { border-right: 1px solid #b5b5b5; height: 20px; flex: none; }
  .status svg { display: block; height: 14px; margin-top: 3px; }
  .pos { width: 280px; padding-left: 11px; }
  .found { width: 350px; }
  .style { width: 206px; padding-left: 9px; }
  .lang { width: 241px; padding-left: 3px; text-align: center; }
  .blank { width: 69px; }
  .ins { width: 30px; padding-left: 8px; }
  .ins svg { width: 18px; }
  .sig { width: 30px; }
  .sum { width: 490px; padding-left: 2px; text-align: center; }
  .zoom { width: 144px; padding-left: 3px; }
  .zoom svg { width: 140px; }
  .status > .pct { border: 0; padding-left: 8px; }

  .taskbar { height: 41px; flex: none; background: #1b1b1b; border-top: 1px solid #484848; display: flex; align-items: center; color: #e2e2e2; letter-spacing: 0.080px; }
  .launch, .app, .live { display: flex; align-items: center; justify-content: center; }
  .launch { padding: 0 15px 0 11px; }
  .launch .icon, .store .icon { width: 28px; height: 28px; }
  .bar { width: 1px; height: 28px; background: #4a4a4a; }
  .app { width: 50px; }
  .app .icon { width: 26px; height: 26px; }
  .files { margin-left: 5px; }
  .live { width: 71px; height: 38px; background: #c8c8c8; border: 1px solid #eee; align-self: flex-start; padding-right: 4px; }
  .live .icon { width: 32px; height: 32px; }
  .empty { width: 72px; height: 40px; background: #333; }
  .slot { width: 10px; display: flex; justify-content: center; }
  .task { width: 182px; height: 40px; display: flex; align-items: center; gap: 9px; padding-left: 5px; white-space: nowrap; }
  .task .icon { width: 14px; height: 14px; }
  .here { background: #424242; }
  .tray { margin-left: auto; display: flex; align-items: center; height: 40px; }
  .en { font-size: 16px; margin: 0 18px 0 16px; }
  .engine .icon { width: 34px; height: 34px; display: block; }
  .mon { margin: 0 12px 0 21px; }
  .mon .icon { width: 18px; height: 18px; display: block; }
  .desk { width: 14px; height: 40px; background: #444; }
  .pointer { position: absolute; left: 1114px; top: 644px; width: 14px; height: 22px; }
</style>
